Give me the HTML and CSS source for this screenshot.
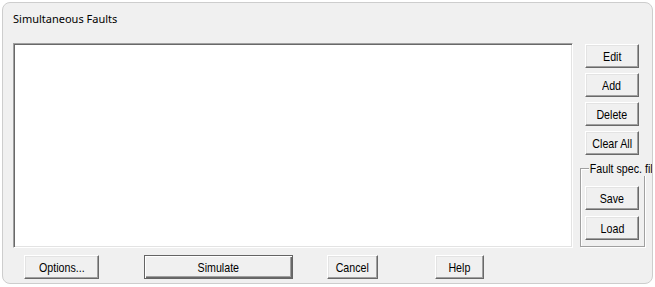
FILE: index.html
```html
<!DOCTYPE html>
<html lang="en">
<head>
    <meta charset="UTF-8">
    <title>Simultaneous Faults</title>
    <link rel="stylesheet" href="styles.css">
</head>
<body>
    <div class="window">
        <div class="title">Simultaneous Faults</div>

        <div class="main">
            <div class="fault-list"></div>

            <div class="side">
                <button class="btn side-btn"><span>Edit</span></button>
                <button class="btn side-btn"><span>Add</span></button>
                <button class="btn side-btn"><span>Delete</span></button>
                <button class="btn side-btn"><span>Clear All</span></button>

                <div class="group">
                    <span class="group-label">Fault spec. file</span>
                    <button class="btn side-btn"><span>Save</span></button>
                    <button class="btn side-btn"><span>Load</span></button>
                </div>
            </div>
        </div>

        <div class="bottom">
            <button class="btn btn-options"><span>Options...</span></button>
            <button class="btn btn-default btn-simulate"><span>Simulate</span></button>
            <button class="btn btn-cancel"><span>Cancel</span></button>
            <button class="btn btn-help"><span>Help</span></button>
        </div>
    </div>
</body>
</html>
```

FILE: styles.css
```css
body {
    margin: 0;
    background-color: #fff;
    font-family: "Liberation Sans", Arial, sans-serif;
}
.window {
    box-sizing: border-box;
    width: 651px;
    height: 282px;
    margin: 2px 0 0 2px;
    border: 1px solid #cdcdcd;
    border-radius: 8px;
    background-color: #f0f0f0;
    overflow: hidden;
}
.title {
    padding: 8px 0 0 10px;
    height: 16px;
    line-height: 16px;
    font-family: "Noto Sans", sans-serif;
    font-size: 11px;
    color: #000;
}
.main {
    display: flex;
    gap: 12px;
    margin: 16px 0 0 10px;
}
.fault-list {
    box-sizing: border-box;
    width: 560px;
    height: 205px;
    background-color: #fff;
    border: 1px solid;
    border-color: #a0a0a0 #fff #fff #a0a0a0;
    box-shadow: inset 1px 1px 0 #696969, inset -1px -1px 0 #e3e3e3;
}
.side {
    display: flex;
    flex-direction: column;
    gap: 5px;
    padding-top: 1px;
}
.btn {
    box-sizing: border-box;
    height: 24px;
    padding: 0;
    border: 1px solid;
    border-color: #fff #696969 #696969 #fff;
    box-shadow: inset -1px -1px 0 #a0a0a0, inset 1px 1px 0 #e3e3e3;
    background-color: #f0f0f0;
    font-family: "Liberation Sans", Arial, sans-serif;
    font-size: 13px;
    color: #000;
    white-space: nowrap;
}
/* the dialog font is a narrow sans, squeeze the label */
.btn span {
    display: inline-block;
    transform: scaleX(0.82);
}
.side-btn {
    width: 54px;
}
.group {
    position: relative;
    box-sizing: border-box;
    width: 65px;
    height: 79px;
    margin: 8px 0 0 -5px;
    padding: 17px 0 0 4px;
    display: flex;
    flex-direction: column;
    gap: 6px;
    border: 1px solid #a0a0a0;
    box-shadow: 1px 1px 0 #fff, inset 1px 1px 0 #fff;
}
.group-label {
    position: absolute;
    top: -8px;
    left: 8px;
    padding: 0 2px 0 1px;
    background-color: #f0f0f0;
    white-space: nowrap;
    font-size: 13px;
    line-height: 15px;
    transform: scaleX(0.82);
    transform-origin: left center;
}
.bottom {
    display: flex;
    margin: 7px 0 0 21px;
}
.btn-options {
    width: 75px;
}
.btn-simulate {
    width: 149px;
    margin-left: 45px;
}
.btn-default {
    border-color: #646464;
    box-shadow: inset 1px 1px 0 #fff, inset -1px -1px 0 #696969, inset -2px -2px 0 #a0a0a0;
}
.btn-cancel {
    width: 51px;
    margin-left: 34px;
}
.btn-help {
    width: 49px;
    margin-left: 57px;
}
```
